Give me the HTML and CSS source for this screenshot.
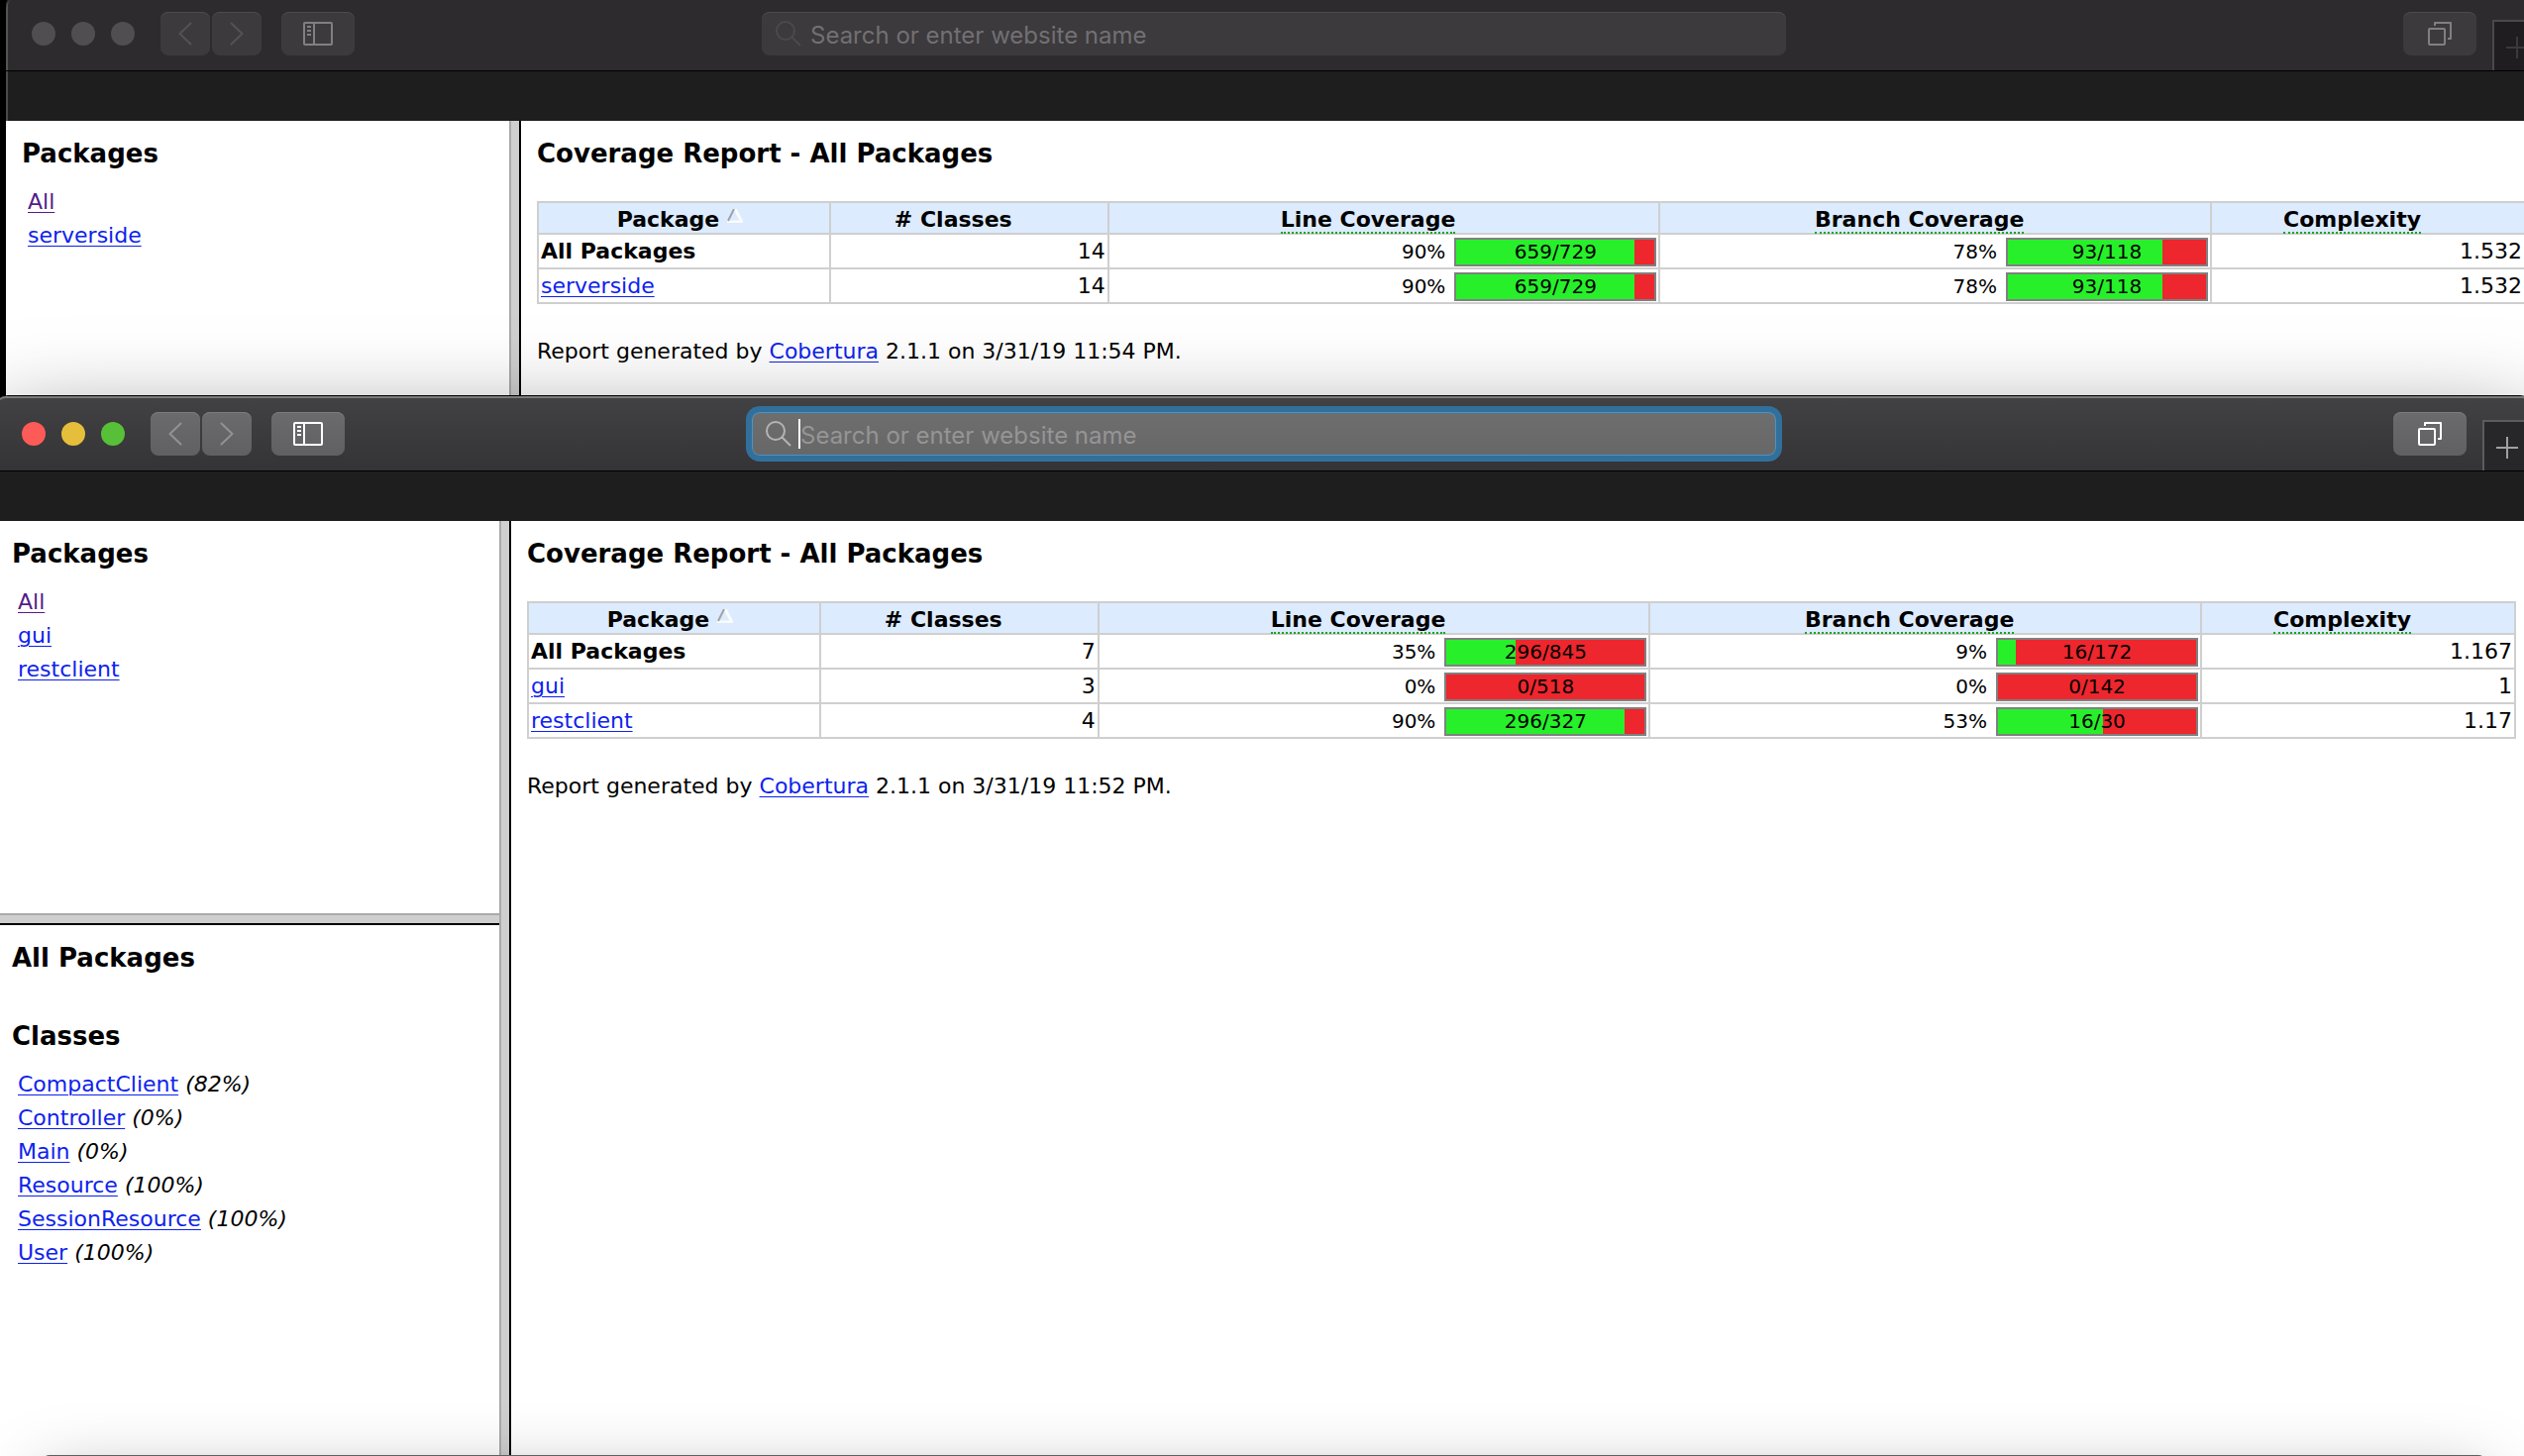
FILE: index.html
```html
<!DOCTYPE html>
<html lang="en">
<head>
<meta charset="utf-8">
<title>Coverage Report</title>
<link rel="stylesheet" href="styles.css">
</head>
<body>
<svg class="sprite" aria-hidden="true">
  <symbol id="i-back" viewBox="0 0 14 24"><path d="M12.500 1.500 1.500 12l11 10.500" fill="none" stroke="currentColor" stroke-width="2" stroke-linecap="round" stroke-linejoin="round"/></symbol>
  <symbol id="i-forward" viewBox="0 0 14 24"><path d="M1.500 1.500 12.500 12l-11 10.500" fill="none" stroke="currentColor" stroke-width="2" stroke-linecap="round" stroke-linejoin="round"/></symbol>
  <symbol id="i-sidebar" viewBox="0 0 30 24"><rect x="1" y="1" width="28" height="22" rx="1" fill="none" stroke="currentColor" stroke-width="2"/><path d="M11 1v22M4 5h4M4 9h4M4 13h4" fill="none" stroke="currentColor" stroke-width="2"/></symbol>
  <symbol id="i-tabs" viewBox="0 0 24 24"><rect x="1" y="7" width="16" height="16" rx="1" fill="none" stroke="currentColor" stroke-width="2"/><path d="M7 4V1h16v16h-3" fill="none" stroke="currentColor" stroke-width="2" stroke-linejoin="round"/></symbol>
  <symbol id="i-plus" viewBox="0 0 22 22"><path d="M11 0v22M0 11h22" fill="none" stroke="currentColor" stroke-width="2"/></symbol>
  <symbol id="i-search" viewBox="0 0 26 26"><circle cx="10" cy="10" r="9" fill="none" stroke="currentColor" stroke-width="2"/><path d="M16.500 16.500 25 25" fill="none" stroke="currentColor" stroke-width="2"/></symbol>
  <symbol id="i-sort" viewBox="0 0 16 14"><path d="M8 0l7 13H0" fill="none" stroke="#fbfbfb" stroke-width="3"/><path d="M7 0 1 12" fill="none" stroke="#a0a2a6" stroke-width="2"/></symbol>
</svg>
<div class="desktop">
  <section class="window window-back">
    <header class="toolbar">
      <div class="tools">
        <div class="lights"><span class="light"></span><span class="light"></span><span class="light"></span></div>
        <div class="nav">
          <button class="tool" type="button" aria-label="Back"><svg class="chevron"><use href="#i-back"/></svg></button>
          <button class="tool" type="button" aria-label="Forward"><svg class="chevron"><use href="#i-forward"/></svg></button>
        </div>
        <button class="tool tool-wide" type="button" aria-label="Show sidebar"><svg class="icon-sidebar"><use href="#i-sidebar"/></svg></button>
      </div>
      <label class="address"><svg class="icon-search" aria-hidden="true"><use href="#i-search"/></svg><input class="address-input" type="text" aria-label="Address" placeholder="Search or enter website name"></label>
      <div class="tools tools-end">
        <button class="tool tool-wide" type="button" aria-label="Show all tabs"><svg class="icon-tabs"><use href="#i-tabs"/></svg></button>
        <button class="new-tab" type="button" aria-label="New tab"><svg class="icon-plus"><use href="#i-plus"/></svg></button>
      </div>
    </header>
    <div class="tab-strip"></div>
    <div class="frames">
      <nav class="pane">
        <h2 class="title">Packages</h2>
        <ul class="list">
          <li><a class="visited" href="#all">All</a></li>
          <li><a href="#serverside">serverside</a></li>
        </ul>
      </nav>
      <div class="split split-v"></div>
      <main class="pane">
        <h1 class="title">Coverage Report - All Packages</h1>
        <table class="report">
          <colgroup><col class="c-package"><col class="c-classes"><col class="c-cover"><col class="c-cover"><col></colgroup>
          <thead><tr>
            <th><span class="head">Package<svg class="icon-sort"><use href="#i-sort"/></svg></span></th>
            <th><span class="head"># Classes</span></th>
            <th><span class="head"><span class="hint">Line Coverage</span></span></th>
            <th><span class="head"><span class="hint">Branch Coverage</span></span></th>
            <th><span class="head"><span class="hint">Complexity</span></span></th>
          </tr></thead>
          <tbody>
            <tr><td><b>All Packages</b></td><td class="num">14</td>
              <td><div class="cover">90%<div class="bar"><span class="fill" style="width:90%"></span><span class="ratio">659/729</span></div></div></td>
              <td><div class="cover">78%<div class="bar"><span class="fill" style="width:78%"></span><span class="ratio">93/118</span></div></div></td>
              <td class="num">1.532</td></tr>
            <tr><td><a href="#serverside">serverside</a></td><td class="num">14</td>
              <td><div class="cover">90%<div class="bar"><span class="fill" style="width:90%"></span><span class="ratio">659/729</span></div></div></td>
              <td><div class="cover">78%<div class="bar"><span class="fill" style="width:78%"></span><span class="ratio">93/118</span></div></div></td>
              <td class="num">1.532</td></tr>
          </tbody>
        </table>
        <p class="footer">Report generated by <a href="#cobertura">Cobertura</a> 2.1.1 on 3/31/19 11:54 PM.</p>
      </main>
    </div>
  </section>

  <section class="window window-front">
    <header class="toolbar">
      <div class="tools">
        <div class="lights"><span class="light close"></span><span class="light minimise"></span><span class="light zoom"></span></div>
        <div class="nav">
          <button class="tool" type="button" aria-label="Back"><svg class="chevron"><use href="#i-back"/></svg></button>
          <button class="tool" type="button" aria-label="Forward"><svg class="chevron"><use href="#i-forward"/></svg></button>
        </div>
        <button class="tool tool-wide" type="button" aria-label="Show sidebar"><svg class="icon-sidebar"><use href="#i-sidebar"/></svg></button>
      </div>
      <label class="address"><svg class="icon-search" aria-hidden="true"><use href="#i-search"/></svg><input class="address-input" type="text" aria-label="Address" placeholder="Search or enter website name"></label>
      <div class="tools tools-end">
        <button class="tool tool-wide" type="button" aria-label="Show all tabs"><svg class="icon-tabs"><use href="#i-tabs"/></svg></button>
        <button class="new-tab" type="button" aria-label="New tab"><svg class="icon-plus"><use href="#i-plus"/></svg></button>
      </div>
    </header>
    <div class="tab-strip"></div>
    <div class="frames">
      <div class="stack">
        <nav class="pane">
          <h2 class="title">Packages</h2>
          <ul class="list">
            <li><a class="visited" href="#all">All</a></li>
            <li><a href="#gui">gui</a></li>
            <li><a href="#restclient">restclient</a></li>
          </ul>
        </nav>
        <div class="split split-h"></div>
        <nav class="pane">
          <h2 class="title title-group">All Packages</h2>
          <h2 class="title">Classes</h2>
          <ul class="list">
            <li><a href="#compactclient">CompactClient</a> <i>(82%)</i></li>
            <li><a href="#controller">Controller</a> <i>(0%)</i></li>
            <li><a href="#main">Main</a> <i>(0%)</i></li>
            <li><a href="#resource">Resource</a> <i>(100%)</i></li>
            <li><a href="#sessionresource">SessionResource</a> <i>(100%)</i></li>
            <li><a href="#user">User</a> <i>(100%)</i></li>
          </ul>
        </nav>
      </div>
      <div class="split split-v"></div>
      <main class="pane">
        <h1 class="title">Coverage Report - All Packages</h1>
        <table class="report">
          <colgroup><col class="c-package"><col class="c-classes"><col class="c-cover"><col class="c-cover"><col></colgroup>
          <thead><tr>
            <th><span class="head">Package<svg class="icon-sort"><use href="#i-sort"/></svg></span></th>
            <th><span class="head"># Classes</span></th>
            <th><span class="head"><span class="hint">Line Coverage</span></span></th>
            <th><span class="head"><span class="hint">Branch Coverage</span></span></th>
            <th><span class="head"><span class="hint">Complexity</span></span></th>
          </tr></thead>
          <tbody>
            <tr><td><b>All Packages</b></td><td class="num">7</td>
              <td><div class="cover">35%<div class="bar"><span class="fill" style="width:35%"></span><span class="ratio">296/845</span></div></div></td>
              <td><div class="cover">9%<div class="bar"><span class="fill" style="width:9%"></span><span class="ratio">16/172</span></div></div></td>
              <td class="num">1.167</td></tr>
            <tr><td><a href="#gui">gui</a></td><td class="num">3</td>
              <td><div class="cover">0%<div class="bar"><span class="fill" style="width:0%"></span><span class="ratio">0/518</span></div></div></td>
              <td><div class="cover">0%<div class="bar"><span class="fill" style="width:0%"></span><span class="ratio">0/142</span></div></div></td>
              <td class="num">1</td></tr>
            <tr><td><a href="#restclient">restclient</a></td><td class="num">4</td>
              <td><div class="cover">90%<div class="bar"><span class="fill" style="width:90%"></span><span class="ratio">296/327</span></div></div></td>
              <td><div class="cover">53%<div class="bar"><span class="fill" style="width:53%"></span><span class="ratio">16/30</span></div></div></td>
              <td class="num">1.17</td></tr>
          </tbody>
        </table>
        <p class="footer">Report generated by <a href="#cobertura">Cobertura</a> 2.1.1 on 3/31/19 11:52 PM.</p>
      </main>
    </div>
  </section>
  <div class="window-edge"></div>
</div>
</body>
</html>
```
FILE: styles.css
```css
* { box-sizing: border-box; }

body {
  margin: 0;
  font-family: "DejaVu Sans", Verdana, sans-serif;
  font-size: 22px;
  line-height: 26px;
  color: #000;
}

.sprite { display: none; }

.desktop {
  position: relative;
  height: 100vh;
  overflow: hidden;
  background: #000;
}

/* Windows overlap freely on the desktop */
.window {
  position: absolute;
  display: flex;
  flex-direction: column;
  border-top: 1px solid #000;
}

.window-back {
  top: -5px;
  left: 6px;
  right: -18px;
  bottom: 50%;
  --bar: #2d2b2e;
  --tool: #3c3a3d;
  --tool-edge: #4d4b4e;
  --icon: #817f82;
  --chevron: #545255;
  --search: #4b494c;
  --hint: #727073;
  --tab: #1f1d20;
  --tab-edge: #4a484b;
  --plus: #3b393c;
  --light: #504e51;
  --caret: transparent;
  --top-edge: #2d2b2e;
}

.window-front {
  top: 399px;
  left: -4px;
  right: -8px;
  bottom: 0;
  box-shadow: 0 40px 100px rgba(0, 0, 0, .6);
  border-radius: 12px 12px 0 0;
  --bar: linear-gradient(#424143, #343335);
  --tool: linear-gradient(#6b6b6d, #606062);
  --tool-edge: #7d7d7f;
  --icon: #fff;
  --chevron: #929294;
  --search: #b4b4b4;
  --hint: #959595;
  --tab: #272628;
  --tab-edge: #5c5b5d;
  --plus: #a09fa1;
  --caret: #fff;
  --top-edge: #7b7a7c;
}

/* Top edge of the window that lies mostly below the screen */
.window-edge {
  position: absolute;
  top: calc(100% - 1px);
  left: 42px;
  right: 38px;
  height: 400px;
  border-radius: 8px 8px 0 0;
  background: #606060;
  box-shadow: 0 25px 70px rgba(0, 0, 0, .35);
}

.toolbar {
  display: grid;
  grid-template-columns: 1fr 1034px 1fr;
  height: 76px;
  padding-top: 16px;
  border-bottom: 1px solid #000;
  border-radius: 10px 10px 0 0;
  background: var(--bar);
  box-shadow: inset 0 2px var(--top-edge), inset 2px 0 #555356;
}

.tools {
  display: flex;
  align-items: flex-start;
  gap: 20px;
  padding-left: 26px;
}

.tools-end {
  justify-content: flex-end;
  gap: 16px;
  padding: 0;
}

.lights {
  display: flex;
  gap: 16px;
  padding: 10px 6px 0 0;
}

.light {
  width: 24px;
  height: 24px;
  border-radius: 50%;
  background: var(--light);
}

.close { background: #fd5b57; }
.minimise { background: #e5bf3c; }
.zoom { background: #57c038; }

.nav { display: flex; gap: 2px; }

.tool {
  display: flex;
  align-items: center;
  justify-content: center;
  width: 50px;
  height: 44px;
  padding: 0;
  border: 0;
  border-radius: 8px;
  background: var(--tool);
  box-shadow: inset 0 1px var(--tool-edge);
  color: var(--icon);
}

.tool-wide { width: 74px; }

.chevron { width: 14px; height: 24px; color: var(--chevron); }
.icon-sidebar { width: 30px; height: 24px; }
.icon-tabs { width: 24px; height: 24px; }
.icon-plus { width: 22px; height: 22px; }
.icon-search { flex: none; width: 26px; height: 26px; color: var(--search); }

.new-tab {
  display: flex;
  align-items: center;
  justify-content: center;
  width: 50px;
  height: 51px;
  margin-top: 8px;
  padding: 2px 2px 0 0;
  border: 0 solid var(--tab-edge);
  border-width: 2px 0 0 2px;
  background: var(--tab);
  color: var(--plus);
}

.address {
  display: flex;
  align-items: center;
  gap: 7px;
  height: 44px;
  padding: 0 14px;
  border-radius: 8px;
  background: var(--tool);
  box-shadow: inset 0 1px var(--tool-edge);
}

.window-front .address {
  background: linear-gradient(#6e6e6f, #676767);
  box-shadow: inset 0 0 0 1px #4a93c4, 0 0 0 6px #31709c;
}

.address-input {
  flex: 1;
  height: 30px;
  padding: 2px 0 0;
  border: 0;
  border-left: 2px solid var(--caret);
  outline: 0;
  background: none;
  font-family: Inter, sans-serif;
  font-size: 24px;
  color: #fff;
}

.address-input::placeholder { color: var(--hint); opacity: 1; }

.tab-strip {
  flex: none;
  height: 50px;
  background: #1e1e1e;
}

.window-back .tab-strip { box-shadow: inset 2px 0 #4a4a4a; }

.frames {
  flex: 1;
  display: grid;
  grid-template-columns: 508fr 12px 2040fr;
  min-height: 0;
  background: #fff;
}

.stack {
  display: grid;
  grid-template-rows: 396fr 12px 536fr;
  min-height: 0;
}

.split { background: #cfcfcf; }
.split-v { border-left: 2px solid #aaa; border-right: 2px solid #000; }
.split-h { border-top: 2px solid #aaa; border-bottom: 2px solid #000; }

.pane {
  min-width: 0;
  padding: 18px 16px 0;
}

.title {
  margin: 0 0 17px;
  font-size: 26px;
  line-height: 30px;
}

h1.title { margin-bottom: 33px; }
.title-group { margin-bottom: 49px; }

.list {
  margin: 0;
  padding: 0 6px;
  list-style: none;
  line-height: 34px;
}

a {
  color: #0d22ee;
  text-decoration-thickness: 1px;
  text-underline-offset: 3px;
}

.visited { color: #551a8b; }

.report {
  width: 100%;
  table-layout: fixed;
  border-collapse: collapse;
}

.c-package { width: 14.7%; }
.c-classes { width: 14%; }
.c-cover { width: 27.75%; }

th, td {
  padding: 1px 2px 0;
  border: 2px solid #cfcfcf;
}

th {
  height: 32px;
  padding-top: 3px;
  background: #dcebfe;
  line-height: 27px;
}

td { height: 35px; line-height: 32px; }

.head {
  position: relative;
  padding-right: 32px;
}

/* Sort arrow sits in the room that every heading keeps at its right */
.icon-sort {
  position: absolute;
  top: 2px;
  right: 8px;
  width: 16px;
  height: 14px;
}

.hint { border-bottom: 2px dotted #14a51e; }

.num { text-align: right; }

.cover {
  display: flex;
  align-items: center;
  justify-content: flex-end;
  gap: 9px;
  height: 32px;
  font-size: 20px;
}

.bar {
  display: grid;
  width: 204px;
  height: 29px;
  border: 2px solid #808080;
  background: #ee262d;
  line-height: 25px;
  text-align: center;
}

.fill, .ratio { grid-area: 1 / 1; }
.fill { background: #27f02b; }

.footer { margin: 35px 0 0; }
```
